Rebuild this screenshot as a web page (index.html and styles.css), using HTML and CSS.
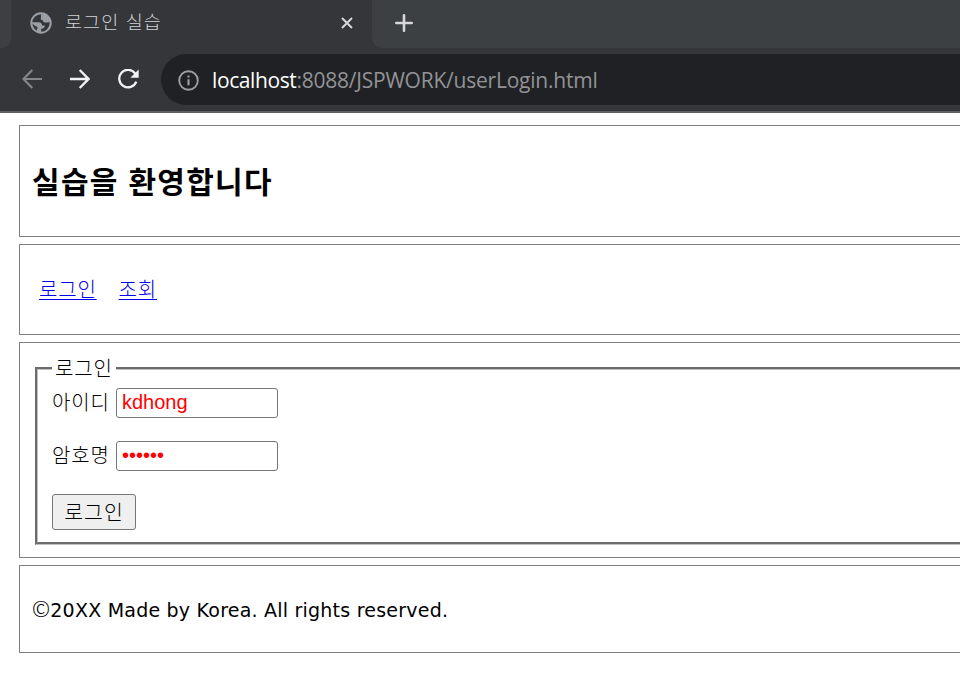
FILE: index.html
```html
<!DOCTYPE html>
<html lang="ko">
<head>
<meta charset="utf-8">
<title>로그인 실습</title>
<link rel="stylesheet" href="styles.css">
</head>
<body>
<div class="browser">
  <div class="tabstrip">
    <div class="prev-tab"></div>
    <div class="tab">
      <svg class="globe" width="22" height="22" viewBox="0 0 22 22">
        <circle cx="11" cy="11" r="9.7" fill="none" stroke="#9aa0a6" stroke-width="2"/>
        <path fill="#9aa0a6" d="M12.5 1 C11 2.5 10.4 4 11.3 5 C10 6.7 10.7 7.7 12.3 8 C13.2 8.3 13 9.8 14 10.3 C15.7 11 17.5 9.7 20.5 10.6 L20.5 7 L17 3Z M1.5 10.2 H8.4 C11 10.4 12.2 11.4 12 13.6 H14.8 C14.9 16 13.5 16.6 11.2 16.7 V20.7 L7 20 L6.8 17.4 C8.7 16 7 14.6 5 13.8 C3.6 13.2 3.1 11.8 1.5 11.6Z"/>
      </svg>
      <span class="tab-title">로그인 실습</span>
      <svg class="close" width="12" height="12" viewBox="0 0 12 12"><path d="M1 1 L11 11 M11 1 L1 11" stroke="#d5d7da" stroke-width="2" fill="none"/></svg>
    </div>
    <div class="strip-rest">
      <svg width="18" height="18" viewBox="0 0 18 18"><path d="M9 1.3 V16.7 M1.3 9 H16.7" stroke="#d5d7da" stroke-width="2.6" fill="none" stroke-linecap="round"/></svg>
    </div>
  </div>
  <div class="toolbar">
    <svg class="nav-icon" width="20" height="20" viewBox="0 0 20 20"><path d="M20 10 H1.5 M10.3 1 L1.5 10 L10.3 19" stroke="#85868a" stroke-width="2.2" fill="none"/></svg>
    <svg class="nav-icon" width="20" height="20" viewBox="0 0 20 20"><path d="M0 10 H18.5 M9.7 1 L18.5 10 L9.7 19" stroke="#f1f3f4" stroke-width="2.4" fill="none"/></svg>
    <svg class="nav-icon reload" width="21" height="20" viewBox="0 0 21 20"><path d="M17.3 4.6 A8.8 8.8 0 1 0 18.3 12.7" stroke="#f1f3f4" stroke-width="2.3" fill="none"/><path d="M20.7 0.5 V8.7 H12.3Z" fill="#f1f3f4"/></svg>
    <div class="omnibox">
      <svg width="21" height="21" viewBox="0 0 21 21"><circle cx="10.5" cy="10.5" r="9.3" stroke="#9aa0a6" stroke-width="1.9" fill="none"/><path d="M10.5 9.3 V15.2 M10.5 5.5 V7.6" stroke="#9aa0a6" stroke-width="2.1"/></svg>
      <span class="url"><b>localhost</b>:8088/JSPWORK/userLogin.html</span>
    </div>
  </div>
</div>
<main class="page">
  <header class="box box-header"><h1>실습을 환영합니다</h1></header>
  <nav class="box box-nav"><a href="#">로그인</a><a href="#">조회</a></nav>
  <section class="box box-form">
    <fieldset>
      <legend>로그인</legend>
      <div class="row"><label for="uid">아이디</label><input id="uid" type="text" value="kdhong"></div>
      <div class="row"><label for="pw">암호명</label><input id="pw" type="password" value="123456"></div>
      <button type="button">로그인</button>
    </fieldset>
  </section>
  <footer class="box box-footer"><p><span class="copy">©</span>20XX Made by Korea. All rights reserved.</p></footer>
</main>
</body>
</html>
```
FILE: styles.css
```css
* { box-sizing: border-box; }
html, body { margin: 0; height: 100%; overflow: hidden; background: #fff; }
body { font-family: "Noto Sans CJK KR", sans-serif; font-weight: 300; color: #000; }

.browser { height: 113px; background: #35363a; border-bottom: 2px solid #5f6064; }
.tabstrip { display: flex; height: 48px; background: #35363a; }
.prev-tab { width: 11px; background: #3c4043; border-radius: 0 0 9px 0; }
.tab { width: 361px; display: flex; align-items: flex-start; }
.globe { margin: 12px 0 0 19px; }
.tab-title { margin: 8px 0 0 13px; font-size: 18.5px; line-height: 26px; letter-spacing: 1.1px; color: #d0d2d5; }
.close { margin: 17px 19px 0 auto; }
.strip-rest { flex: 1; background: #3c4043; border-radius: 0 0 0 10px; }
.strip-rest svg { display: block; margin: 14px 0 0 23px; }

.toolbar { display: flex; height: 63px; padding-top: 6px; }
.nav-icon { margin: 15px 0 0 22px; flex: none; }
.nav-icon + .nav-icon { margin-left: 28px; }
.omnibox { flex: 1; display: flex; align-items: center; height: 51px; margin-left: 22px; padding: 1px 0 0 17px; background: #202124; border-radius: 26px 0 0 26px; }
.url { margin: -1px 0 0 13px; font: 400 21px/28px "Open Sans", sans-serif; letter-spacing: -0.22px; color: #929396; white-space: nowrap; }
.url b { font-weight: 400; letter-spacing: -0.4px; color: #fff; }

.page { display: flex; flex-direction: column; gap: 7px; width: 980px; padding: 12px 0 0 19px; }
.box { border: 1px solid #808080; flex: none; }
.box-header { height: 112px; padding: 33px 12px; }
h1 { margin: 0; font-size: 30px; line-height: 42px; font-weight: 700; letter-spacing: 1.3px; white-space: nowrap; }
.box-nav { height: 91px; padding: 29px 19px; display: flex; gap: 22px; }
.box-nav a { font-size: 20px; line-height: 30px; height: 30px; letter-spacing: 0.8px; color: #0000ee; text-underline-offset: 2px; text-decoration-thickness: 1px; }
.box-form { height: 216px; padding: 10px 15px; }
fieldset { margin: 0; height: 192px; border: 3px groove #c0c0c0; padding: 5px 14px; width: 940px; }
legend { padding: 0 3px; margin: 0; font-size: 20px; line-height: 30px; height: 30px; letter-spacing: 0.9px; }
.row { display: flex; height: 30px; margin: 0 0 23px; }
.row label { width: 64px; font-size: 20px; line-height: 28px; letter-spacing: 0.8px; }
input { width: 162px; height: 30px; margin: 0; padding: 0 5px 2px; border: 1px solid #767676; border-radius: 3px; font: 400 20px "Liberation Sans", Arial, sans-serif; color: #f00; background: #fff; outline: 0; }
button { display: block; width: 84px; height: 36px; padding: 0 0 2px; border: 1px solid #767676; border-radius: 3px; background: #efefef; font: 300 20.5px/30px "Noto Sans CJK KR", sans-serif; letter-spacing: 1px; color: #000; }
.box-footer { height: 88px; padding: 29px 12px; }
.box-footer p { margin: 0; font: 400 19px/30px "DejaVu Sans", sans-serif; letter-spacing: 0.22px; white-space: nowrap; }
.copy { margin-right: 0; font-family: "Noto Sans CJK KR", sans-serif; font-weight: 300; font-size: 22px; line-height: 20px; }
```
